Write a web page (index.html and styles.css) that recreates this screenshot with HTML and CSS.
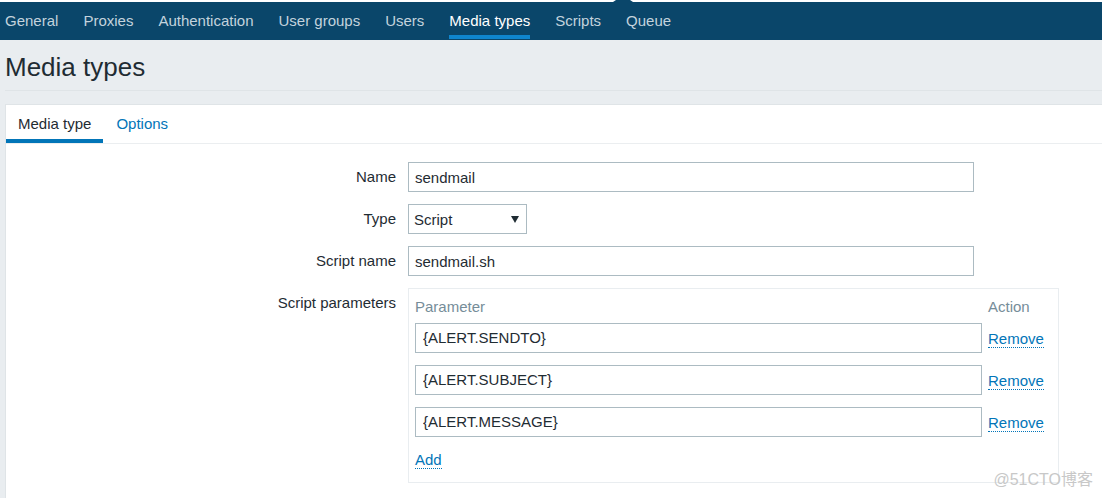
FILE: index.html
```html
<!DOCTYPE html>
<html lang="en">
<head>
<meta charset="utf-8">
<title>Media types</title>
<link rel="stylesheet" href="styles.css">
</head>
<body>
<nav class="nav">
  <svg class="nav-notch" width="20" height="2" viewBox="0 0 20 2" aria-hidden="true"><path d="M0 2 L3 0 H17 L20 2Z" fill="#0a466a"/></svg>
  <a class="nav-link" href="#">General</a>
  <a class="nav-link" href="#">Proxies</a>
  <a class="nav-link" href="#">Authentication</a>
  <a class="nav-link" href="#">User groups</a>
  <a class="nav-link" href="#">Users</a>
  <a class="nav-link nav-link-selected" href="#">Media types</a>
  <a class="nav-link" href="#">Scripts</a>
  <a class="nav-link" href="#">Queue</a>
</nav>
<header class="header"><h1 class="title">Media types</h1></header>
<main class="panel">
  <div class="tabs">
    <a class="tab tab-active" href="#">Media type</a>
    <a class="tab" href="#">Options</a>
  </div>
  <form class="form">
    <label class="label" for="name">Name</label>
    <input class="input" id="name" type="text" value="sendmail">
    <label class="label" for="type">Type</label>
    <div class="select-wrap">
      <select class="select" id="type"><option>Script</option></select>
      <svg class="arrow" width="8" height="7" viewBox="0 0 8 7" aria-hidden="true"><path d="M0 0H8L4 7Z" fill="#1f2c33"/></svg>
    </div>
    <label class="label" for="script">Script name</label>
    <input class="input" id="script" type="text" value="sendmail.sh">
    <span class="label" id="params">Script parameters</span>
    <div class="params">
      <table class="table" aria-labelledby="params">
        <thead><tr><th class="param-col">Parameter</th><th>Action</th></tr></thead>
        <tbody>
          <tr><td><input class="input" type="text" aria-label="Parameter 1" value="{ALERT.SENDTO}"></td><td><button class="link" type="button">Remove</button></td></tr>
          <tr><td><input class="input" type="text" aria-label="Parameter 2" value="{ALERT.SUBJECT}"></td><td><button class="link" type="button">Remove</button></td></tr>
          <tr><td><input class="input" type="text" aria-label="Parameter 3" value="{ALERT.MESSAGE}"></td><td><button class="link" type="button">Remove</button></td></tr>
        </tbody>
      </table>
      <button class="link" type="button">Add</button>
    </div>
  </form>
</main>
<div class="watermark">@51CTO博客</div>
</body>
</html>
```

FILE: styles.css
```css
* {
  box-sizing: border-box;
}

body {
  margin: 0;
  min-height: 100vh;
  display: flex;
  flex-direction: column;
  background: #e9edf0;
  color: #1f2c33;
  font: 15px/18px "Liberation Sans", Arial, "Noto Sans CJK SC", sans-serif;
}

.nav {
  position: relative;
  display: flex;
  gap: 25px;
  padding: 0 5px 1px;
  border-top: 2px solid #fff;
  background: #0a466a;
}

.nav-notch {
  position: absolute;
  top: -2px;
  left: 613px;
}

.nav-link {
  padding: 10px 0 5px;
  border-bottom: 4px solid transparent;
  color: #c3d3dd;
  text-decoration: none;
  white-space: nowrap;
}

.nav-link-selected {
  border-color: #0f85cd;
  color: #fff;
}

.header {
  margin: 0 0 13px 5px;
  padding: 12px 0 8px;
  border-bottom: 1px solid #dfe4e7;
}

.title {
  margin: 0;
  font-size: 26px;
  line-height: 30px;
  font-weight: 400;
}

.panel {
  flex: 1;
  margin-left: 5px;
  border: solid #dfe4e7;
  border-width: 1px 0 0 1px;
  background: #fff;
}

.tabs {
  display: flex;
  gap: 1px;
  border-bottom: 1px solid #ebeef0;
}

.tab {
  padding: 10px 12px 6px;
  border-bottom: 4px solid transparent;
  color: #0275b8;
  text-decoration: none;
}

.tab-active {
  border-color: #0275b8;
  color: #1f2c33;
}

.form {
  display: grid;
  grid-template-columns: 390px minmax(0, 1fr);
  gap: 12px;
  padding: 18px 12px 15px 0;
}

.label {
  padding-top: 6px;
  text-align: right;
}

.input,
.select {
  display: block;
  width: 100%;
  height: 30px;
  margin: 0;
  border: 1px solid #acbbc2;
  border-radius: 0;
  background: #fff;
  color: #1f2c33;
  font: inherit;
}

.input {
  max-width: 566px;
  padding: 1px 6px 0;
}

.select-wrap {
  position: relative;
  width: 119px;
}

.select {
  appearance: none;
  padding: 1px 20px 0 5px;
}

.arrow {
  position: absolute;
  top: 12px;
  right: 8px;
  pointer-events: none;
}

.params {
  width: 100%;
  max-width: 651px;
  padding: 6px 6px 13px;
  border: 1px solid #e9edf0;
}

.table {
  width: 100%;
  border-collapse: collapse;
}

.table th {
  padding: 3px 0 7px;
  color: #768d99;
  font-weight: 400;
  text-align: left;
}

.table .param-col {
  width: 573px;
}

.table td {
  padding: 0 0 12px;
}

.table .input {
  max-width: 567px;
  padding: 0 7px 1px;
}

.link {
  padding: 2px 0 0;
  border: 0;
  border-bottom: 1px dotted #0275b8;
  background: none;
  color: #0275b8;
  font: inherit;
  line-height: 17px;
}

.watermark {
  position: absolute;
  right: 9px;
  bottom: 8px;
  color: #c8c8c8;
  font-size: 16px;
  line-height: 20px;
}
```
